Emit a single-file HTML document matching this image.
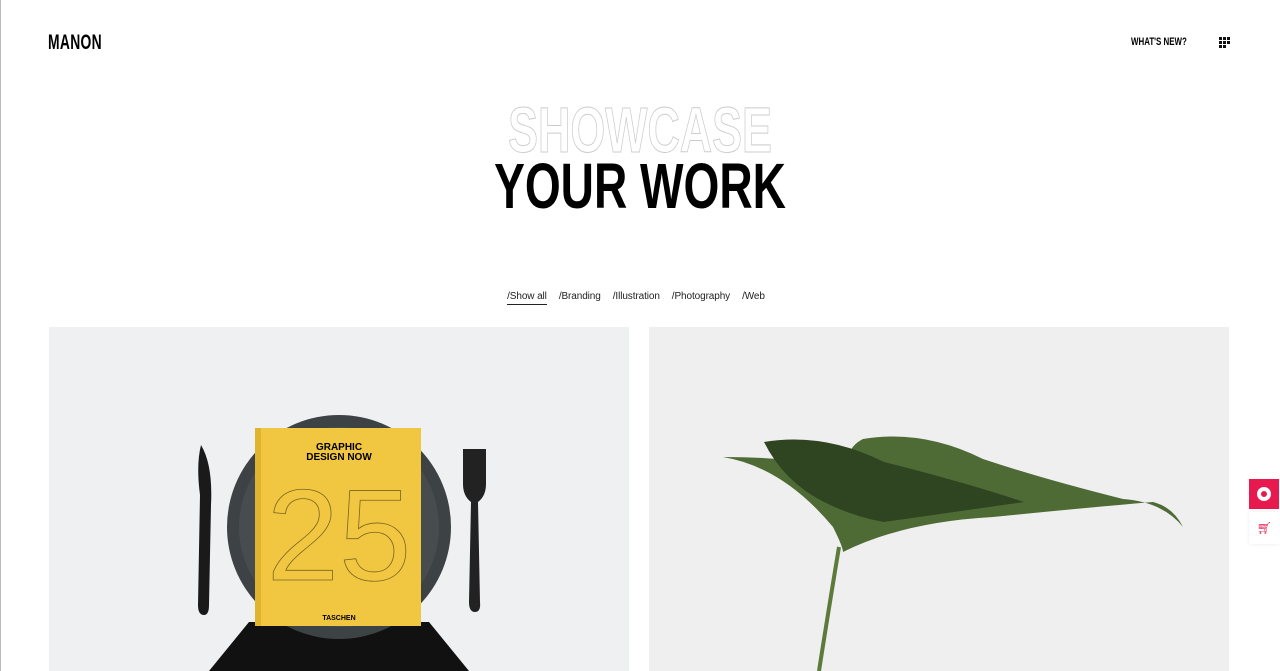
<!DOCTYPE html>
<html><head><style>
*{margin:0;padding:0;box-sizing:border-box}
body{width:1280px;height:671px;overflow:hidden;background:#fff;font-family:"Liberation Sans",sans-serif;position:relative}
.n{font-family:"Liberation Sans Narrow","Liberation Sans",sans-serif;font-weight:700}
.logo{position:absolute;left:48px;top:31px;font-size:21px;transform:scaleX(.66);transform-origin:left;letter-spacing:.5px}
.wn{position:absolute;left:1131px;top:36px;font-size:11px;transform:scaleX(.72);transform-origin:left}
.grid{position:absolute;left:1219px;top:37px;width:11px;height:11px}
.grid i{position:absolute;width:3px;height:3px;background:#111}
.h1{position:absolute;left:0;width:1280px;text-align:center;font-size:64px;line-height:64px}
.s{top:98px;color:#fff;-webkit-text-stroke:1px #ccc;transform:scaleX(.70)}
.y{top:154px;color:#000;transform:scaleX(.72)}
.f{position:absolute;top:291px;left:-4px;width:1280px;text-align:center;font-size:10px;color:#222;letter-spacing:-.1px}
.f span{margin:0 6px}
.f span:first-child{border-bottom:1px solid #222;padding-bottom:2px}
.c1{position:absolute;left:49px;top:327px;width:580px;height:344px;background:#eef0f2;overflow:hidden}
.c2{position:absolute;left:649px;top:327px;width:580px;height:344px;background:#f0eff0;overflow:hidden}
</style></head><body>
<div style="position:absolute;left:0;top:0;width:1px;height:671px;background:#bbb"></div>
<div class="logo n">MANON</div>
<div class="wn n">WHAT'S NEW?</div>
<div class="grid"><i style="left:0;top:0"></i><i style="left:4px;top:0"></i><i style="left:8px;top:0"></i><i style="left:0;top:4px"></i><i style="left:4px;top:4px"></i><i style="left:8px;top:4px"></i><i style="left:0;top:8px"></i><i style="left:4px;top:8px"></i></div>
<div class="h1 n s">SHOWCASE</div>
<div class="h1 n y">YOUR WORK</div>
<div class="f"><span>/Show all</span><span>/Branding</span><span>/Illustration</span><span>/Photography</span><span>/Web</span></div>
<div class="c1">
<svg width="580" height="344">
<polygon points="200,295 380,295 420,344 160,344" fill="#111"/>
<circle cx="290" cy="200" r="112" fill="#3d4245"/>
<circle cx="290" cy="200" r="100" fill="#474c4f"/>
<path d="M152,118 q12,20 10,60 l-2,100 q0,10 -5,10 q-6,0 -6,-10 l2,-110 q-4,-30 1,-50z" fill="#1a1a1a"/>
<path d="M414,122 l0,35 q0,12 8,18 l-2,100 q0,10 6,10 q6,0 5,-10 l-2,-100 q8,-6 8,-18 l0,-35" fill="#222"/>
<rect x="206" y="101" width="166" height="198" fill="#f1c640"/>
<rect x="206" y="101" width="6" height="198" fill="#e0b330"/>
<text x="290" y="123" font-size="10" font-weight="700" text-anchor="middle" font-family="Liberation Sans">GRAPHIC</text>
<text x="290" y="133" font-size="10" font-weight="700" text-anchor="middle" font-family="Liberation Sans">DESIGN NOW</text>
<text x="290" y="253" font-size="130" fill="none" stroke="#7a6420" stroke-width=".8" text-anchor="middle" font-family="Liberation Sans">25</text>
<text x="290" y="293" font-size="7" font-weight="700" text-anchor="middle" font-family="Liberation Sans">TASCHEN</text>
</svg></div>
<div class="c2">
<svg width="580" height="344">
<path d="M190,220 q-10,60 -20,124" stroke="#5c7a3a" stroke-width="4" fill="none"/>
<path d="M74,130 q60,10 110,70 q10,20 10,25 q60,-30 150,-35 q100,-10 160,-15 q20,5 30,25 q-20,-25 -60,-28 q-80,-20 -140,-40 q-60,-30 -120,-20 q-20,10 -10,30 q-60,-12 -130,-12z" fill="#4f6b35"/>
<path d="M115,115 q60,-10 120,20 q80,20 140,40 q-70,10 -140,20 q-30,-5 -60,-20 q-40,-20 -60,-60z" fill="#2f4420"/>
</svg></div>
<div style="position:absolute;left:1249px;top:479px;width:30px;height:30px;background:#e8194f"><div style="position:absolute;left:8px;top:8px;width:14px;height:14px;border-radius:50%;border:4px solid #fff"></div></div>
<div style="position:absolute;left:1249px;top:512px;width:31px;height:32px;background:#fff;box-shadow:0 0 4px rgba(0,0,0,.08);color:#e8194f;font-size:12px;text-align:center;line-height:32px">🛒︎</div>
</body></html>
